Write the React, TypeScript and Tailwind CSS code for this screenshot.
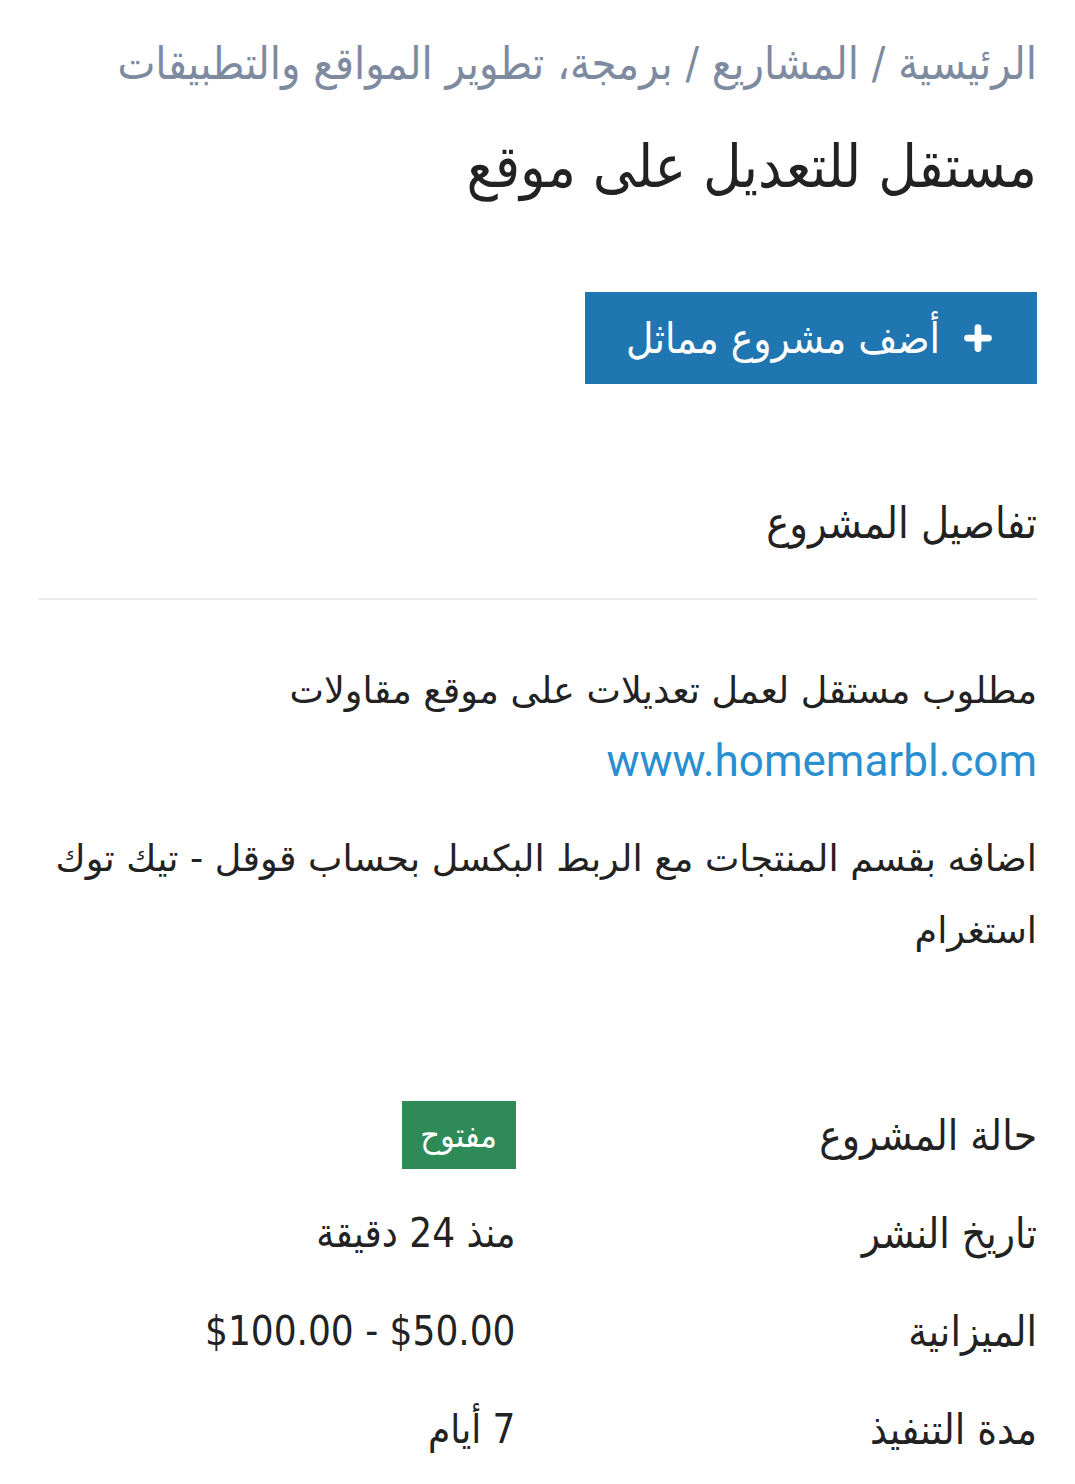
import { Plus } from 'lucide-react';

const rows = [
  { label: 'تاريخ النشر', value: 'منذ 24 دقيقة' },
  { label: 'الميزانية', value: '$50.00 - $100.00' },
  { label: 'مدة التنفيذ', value: '7 أيام' },
];

export default function App() {
  return (
    <div
      dir="rtl"
      className="min-h-screen bg-white px-[38px] pt-[36px] text-[#222]"
      style={{ fontFamily: '"DejaVu Sans Condensed", "DejaVu Sans", sans-serif' }}
    >
      {/* Breadcrumb */}
      <div className="text-[44.8px] leading-[56px] text-[#7d8aa0]">
        الرئيسية / المشاريع / برمجة، تطوير المواقع والتطبيقات
      </div>

      <h1 className="mt-[43px] text-[59px] leading-[64px] font-normal text-[#222]">مستقل للتعديل على موقع</h1>

      <div className="mt-[93px] flex">
        <button className="flex h-[92px] w-[452px] items-center justify-center gap-5 bg-[#1f76b1] text-[42px] text-white">
          <Plus className="h-9 w-9" strokeWidth={4.5} />
          <span>أضف مشروع مماثل</span>
        </button>
      </div>

      <h2 className="mt-[111px] text-[43px] leading-[56px] font-normal">تفاصيل المشروع</h2>
      <hr className="mt-[47px] border-t-2 border-[#ececec]" />

      {/* Description */}
      <div
        className="mt-[55px] text-[36.6px] leading-[72px] text-[#222]"
        style={{ fontFamily: '"DejaVu Sans", sans-serif' }}
      >
        <p>مطلوب مستقل لعمل تعديلات على موقع مقاولات</p>
        <p className="text-[44px] leading-[68px] text-[#2a8fd0]" style={{ fontFamily: 'Roboto, sans-serif' }}>www.homemarbl.com</p>
        <p className="mt-[28px]">اضافه بقسم المنتجات مع الربط البكسل بحساب قوقل - تيك توك استغرام</p>
      </div>

      {/* Details */}
      <div className="mt-[128px] text-[42px]">
        <div className="grid h-[80px] grid-cols-2 items-center">
          <div>حالة المشروع</div>
          <div className="pr-[22px]">
            <span className="inline-flex h-[68px] w-[114px] items-center justify-center bg-[#2e8a57] text-[34px] text-white">مفتوح</span>
          </div>
        </div>
        {rows.map((r) => (
          <div key={r.label} className="mt-[18px] grid h-[80px] grid-cols-2 items-center">
            <div>{r.label}</div>
            <div className="pr-[22px] text-[40px]">{r.value}</div>
          </div>
        ))}
      </div>
    </div>
  );
}
